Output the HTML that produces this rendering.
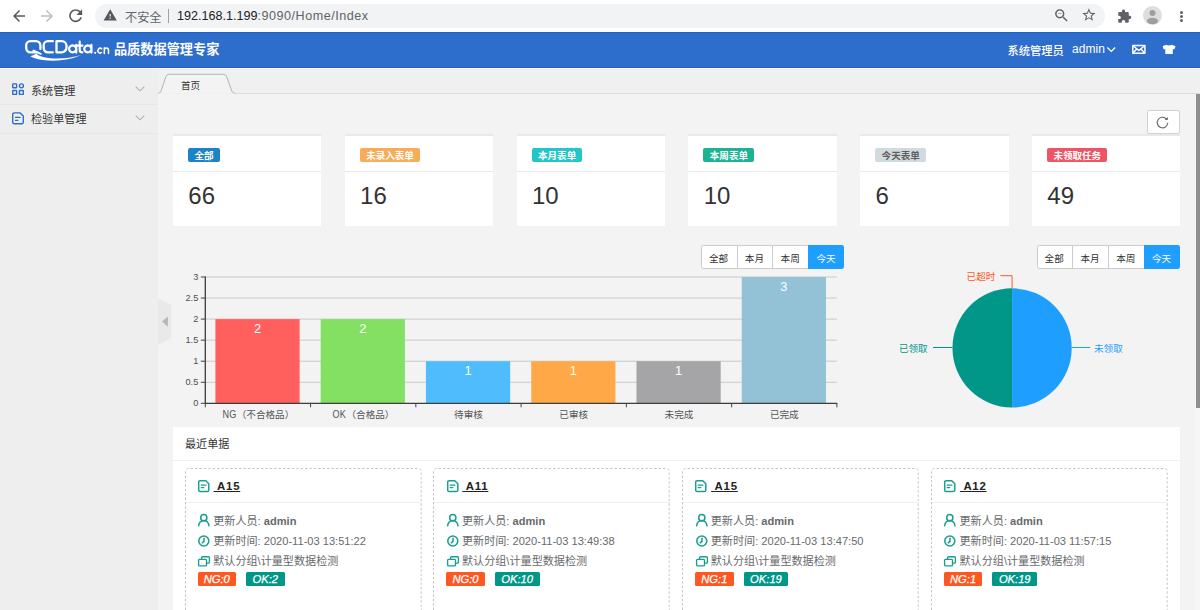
<!DOCTYPE html><html><head><meta charset="utf-8"><title>QCData</title><style>html,body{margin:0;padding:0;overflow:hidden}html{height:610px}body{width:1200px;height:610px;overflow:hidden;position:relative;background:#f3f3f4;font-family:"Liberation Sans","Noto Sans CJK SC",sans-serif;}.t{position:absolute;white-space:nowrap;font-family:"Liberation Sans","Noto Sans CJK SC",sans-serif}.cj{font-family:"Liberation Sans","Noto Sans CJK SC",sans-serif;letter-spacing:0}svg text{font-family:"Liberation Sans",sans-serif}</style></head><body><div style="position:absolute;left:0px;top:0px;width:1200px;height:33px;background:#fff"></div><svg style="position:absolute;left:10px;top:6.7px" width="18" height="18" viewBox="0 0 24 24" fill="#565a5f"><path d="M20 11H7.83l5.59-5.59L12 4l-8 8 8 8 1.41-1.41L7.83 13H20v-2z"/></svg><svg style="position:absolute;left:38.3px;top:6.7px" width="18" height="18" viewBox="0 0 24 24" fill="#bcbec1"><path d="M12 4l-1.41 1.41L16.17 11H4v2h12.17l-5.58 5.59L12 20l8-8z"/></svg><svg style="position:absolute;left:65.8px;top:6px" width="19.4" height="19.4" viewBox="0 0 24 24" fill="#565a5f"><path d="M17.65 6.35C16.2 4.9 14.21 4 12 4c-4.42 0-7.99 3.58-7.99 8s3.57 8 7.99 8c3.73 0 6.84-2.55 7.73-6h-2.08c-.82 2.33-3.04 4-5.65 4-3.31 0-6-2.69-6-6s2.69-6 6-6c1.66 0 3.14.69 4.22 1.78L13 11h7V4l-2.35 2.35z"/></svg><div style="position:absolute;left:95px;top:3.7px;width:1010px;height:24.2px;background:#f1f3f4;border-radius:12.100px"></div><svg style="position:absolute;left:103.4px;top:8.4px" width="14.4" height="14.4" viewBox="0 0 24 24" fill="#55585c"><path d="M1 21h22L12 2 1 21zm12-3h-2v-2h2v2zm0-4h-2v-4h2v4z"/></svg><div class="t" style="left:125px;top:8.6px;line-height:16px"><span class="cj" style="font-size:12.2px;color:#5f6368">不安全</span></div><div style="position:absolute;left:168px;top:9px;width:1px;height:14px;background:#9aa0a6"></div><div class="t" style="left:177px;top:7.5px;font-size:12.6px;line-height:17px"><span style="color:#202124">192.168.1.199</span><span style="color:#5f6368;letter-spacing:0.5px">:9090/Home/Index</span></div><svg style="position:absolute;left:1052.6px;top:7.1px" width="17.1" height="17.1" viewBox="0 0 24 24" fill="#5f6368"><path d="M15.5 14h-.79l-.28-.27C15.41 12.59 16 11.11 16 9.5 16 5.91 13.09 3 9.5 3S3 5.91 3 9.5 5.91 16 9.5 16c1.61 0 3.09-.59 4.23-1.57l.27.28v.79l5 4.99L20.49 19l-4.99-5zm-6 0C7.01 14 5 11.99 5 9.5S7.01 5 9.5 5 14 7.01 14 9.5 11.99 14 9.5 14zM7 9h5v1H7z"/></svg><svg style="position:absolute;left:1081px;top:7.4px" width="15.8" height="15.8" viewBox="0 0 24 24" fill="#5f6368"><path d="M22 9.24l-7.19-.62L12 2 9.19 8.63 2 9.24l5.46 4.73L5.82 21 12 17.27 18.18 21l-1.63-7.03L22 9.24zM12 15.4l-3.76 2.27 1-4.28-3.32-2.88 4.38-.38L12 6.1l1.71 4.04 4.38.38-3.32 2.88 1 4.28L12 15.4z"/></svg><svg style="position:absolute;left:1116.8px;top:9.1px" width="14.9" height="14.9" viewBox="0 0 24 24" fill="#5f6368"><path d="M20.5 11H19V7c0-1.1-.9-2-2-2h-4V3.5C13 2.12 11.88 1 10.5 1S8 2.12 8 3.5V5H4c-1.1 0-1.99.9-1.99 2v3.8H3.5c1.49 0 2.7 1.21 2.7 2.7s-1.21 2.7-2.7 2.7H2V20c0 1.1.9 2 2 2h3.8v-1.5c0-1.49 1.21-2.7 2.7-2.7 1.49 0 2.7 1.21 2.7 2.7V22H17c1.1 0 2-.9 2-2v-4h1.5c1.38 0 2.5-1.12 2.5-2.5S21.88 11 20.5 11z"/></svg><svg style="position:absolute;left:1143px;top:6px" width="19" height="19" viewBox="0 0 19 19"><defs><clipPath id="avc"><circle cx="9.5" cy="9.5" r="9.5"/></clipPath></defs><circle cx="9.5" cy="9.5" r="9.5" fill="#dddddd"/><g clip-path="url(#avc)" fill="#9e9e9e"><circle cx="9.5" cy="7" r="3"/><ellipse cx="9.5" cy="15" rx="5.6" ry="3.3"/></g></svg><div style="position:absolute;left:1179.5px;top:10.7px;width:3px;height:3px;background:#5f6368;border-radius:50%"></div><div style="position:absolute;left:1179.5px;top:15.0px;width:3px;height:3px;background:#5f6368;border-radius:50%"></div><div style="position:absolute;left:1179.5px;top:19.3px;width:3px;height:3px;background:#5f6368;border-radius:50%"></div><div style="position:absolute;left:0px;top:32.1px;width:1200px;height:35.4px;background:#2d6dcc"></div><div style="position:absolute;left:0px;top:32.1px;width:1200px;height:1px;background:#2461c4"></div><div style="position:absolute;left:0px;top:66.5px;width:1200px;height:1px;background:#2461c4"></div><svg style="position:absolute;left:20px;top:36px" width="95" height="28" viewBox="20 36 95 28" fill="none" stroke="#fff" stroke-width="2.3" stroke-linecap="round" stroke-linejoin="round"><path d="M36.5 52.3H30.4a4.2 4.2 0 0 1-4.2-4.2v-2.7a4.2 4.2 0 0 1 4.2-4.2h5.8a4.2 4.2 0 0 1 4.2 4.2v3.6"/><path d="M33.5 50.6l7.2 3.2" stroke-width="2"/><path d="M52.8 41.2H47.9a4.2 4.2 0 0 0-4.2 4.2v2.7a4.2 4.2 0 0 0 4.2 4.2h4.9"/><path d="M56.5 41.2v11.1h5.3a4.7 4.7 0 0 0 4.7-4.7v-1.7a4.7 4.7 0 0 0-4.7-4.7z"/><path d="M76.200 45v7.600M76.200 48.300a3.600 3.400 0 1 0 0 1.200" stroke-width="2.300"/><path d="M79.7 41.6v8.3q0 2.4 2.6 2.4M77.8 45.6h4.6" stroke-width="2.2"/><path d="M91.400 45v7.600M91.400 48.300a3.600 3.400 0 1 0 0 1.200" stroke-width="2.300"/><path d="M30.3 56.2q4-.8 6-2.6q3 3.8 14 4.6q16 1.1 31-3.3q-15 6.6-33 5.6q-13-.8-18-4.3z" fill="#fff" stroke="none"/><circle cx="95.2" cy="52.8" r="1.1" fill="#fff" stroke="none"/><path d="M101.6 48.7a2.3 2.4 0 1 0 0 3.8" stroke-width="1.5"/><path d="M104.3 53.4v-5.6M104.3 50.3q.2-2.4 2.2-2.4t2 2.4v3.1" stroke-width="1.5"/></svg><div class="t" style="left:113.9px;top:41.4px;line-height:16px"><span class="cj" style="font-size:13.2px;font-weight:bold;color:#fff">品质数据管理专家</span></div><div class="t" style="left:1007.4px;top:41.5px;line-height:16px"><span class="cj" style="font-size:11.3px;font-weight:500;color:#fff">系统管理员</span></div><div class="t" style="left:1072px;top:41px;font-size:12px;line-height:16px;color:#fff;letter-spacing:0.05px">admin</div><svg style="position:absolute;left:1105px;top:45px" width="12" height="10" viewBox="1105 45 12 10" fill="none" stroke="#fff" stroke-width="1.3"><path d="M1107.4 47.5l3.900 3.900 3.900-3.900"/></svg><svg style="position:absolute;left:1130px;top:43px" width="18" height="13" viewBox="1130 43 18 13" fill="none" stroke="#fff" stroke-width="1.5" stroke-linejoin="round"><rect x="1132.8" y="45.5" width="12.1" height="7.7"/><path d="M1132.8 45.5l6.050 5 6.050-5M1132.8 53.2l4-4.200M1144.9 53.2l-4-4.200"/></svg><svg style="position:absolute;left:1161px;top:43px" width="17" height="13" viewBox="1161 43 17 13" fill="#fff"><path d="M1166 44.800q2.900 1.500 5.800 0l3.700 1.500-1.200 3.100-1.500-.5v5H1165.300v-5l-1.500.5-1.200-3.100z"/></svg><div style="position:absolute;left:0px;top:67.5px;width:158px;height:542.5px;background:#eeeeee"></div><div style="position:absolute;left:157.6px;top:67.5px;width:1px;height:542.5px;background:#f5f5f5"></div><div style="position:absolute;left:0px;top:103.8px;width:157.6px;height:1px;background:#e6e6e6"></div><div style="position:absolute;left:0px;top:132.7px;width:157.6px;height:1px;background:#e6e6e6"></div><svg style="position:absolute;left:11px;top:82.300px" width="15" height="15" viewBox="11 82 15 15" fill="none" stroke="#2d6dcc" stroke-width="1.4"><rect x="12.7" y="83.9" width="3.9" height="3.9" rx=".5"/><circle cx="21.4" cy="85.85" r="2"/><rect x="12.7" y="90.5" width="3.9" height="3.9" rx=".5"/><rect x="19.4" y="90.5" width="3.9" height="3.9" rx=".5"/></svg><div class="t" style="left:31px;top:81.5px;line-height:16px"><span class="cj" style="font-size:11.1px;color:#333">系统管理</span></div><svg style="position:absolute;left:134px;top:84.8px" width="12" height="8" viewBox="0 0 12 8" fill="none" stroke="#b0b0b0" stroke-width="1.1"><path d="M1.700 1.700l4.300 4.100 4.300-4.100"/></svg><svg style="position:absolute;left:11px;top:110.800px" width="15" height="15" viewBox="11 111 15 15" fill="none" stroke="#2d6dcc" stroke-width="1.4" stroke-linejoin="round"><path d="M14.2 112.9h6l3.1 3.1v6.3a1.5 1.5 0 0 1-1.5 1.5h-7.6a1.5 1.5 0 0 1-1.5-1.5v-7.9a1.5 1.5 0 0 1 1.5-1.5z"/><path d="M15 117.4h5.6M15 120.3h3.4" stroke-width="1.2"/></svg><div class="t" style="left:31px;top:110.3px;line-height:16px"><span class="cj" style="font-size:11.1px;color:#333">检验单管理</span></div><svg style="position:absolute;left:134px;top:114px" width="12" height="8" viewBox="0 0 12 8" fill="none" stroke="#b0b0b0" stroke-width="1.1"><path d="M1.700 1.700l4.300 4.100 4.300-4.100"/></svg><div style="position:absolute;left:158px;top:67.5px;width:1042px;height:26px;background:#f0f0f1"></div><div style="position:absolute;left:0px;top:67.5px;width:1200px;height:1px;background:#f8f8f8"></div><div style="position:absolute;left:158px;top:93.5px;width:1042px;height:516.5px;background:#f3f3f4"></div><div style="position:absolute;left:158px;top:93px;width:1042px;height:1px;background:#dcdcdc"></div><svg style="position:absolute;left:156px;top:72px" width="84" height="23" viewBox="156 72 84 23"><path d="M157.800 93.500q2.400 0 3.300-2.600l4.700-14q.9-2.600 3.300-2.600h54.400q2.400 0 3.300 2.600l4.900 14q.9 2.600 3.800 2.600" fill="#f3f3f4" stroke="#b4b4b4" stroke-width="1"/><path d="M158.500 94h76" stroke="#f3f3f4" stroke-width="1.600"/></svg><div class="t" style="left:181px;top:75.5px;line-height:16px"><span class="cj" style="font-size:9.6px;color:#333">首页</span></div><div style="position:absolute;left:1194.8px;top:93.5px;width:5.2px;height:516.5px;background:#f6f6f6"></div><div style="position:absolute;left:1196px;top:93.5px;width:4px;height:314px;background:#8f8f8f"></div><svg style="position:absolute;left:157px;top:296px" width="16" height="52" viewBox="157 296 16 52"><path d="M158.200 298.300l12.100 6.100q1 .5 1 1.600v31.400q0 1.100-1 1.600l-12.100 6.100z" fill="#e9e9e9"/><path d="M167.900 316.400v10.400l-5.900-5.200z" fill="#b7b7b7"/></svg><div style="position:absolute;left:1147.3px;top:110.2px;width:32.5px;height:23.6px;background:#fff;border:1px solid #d2d2d2;border-radius:2px;box-sizing:border-box"></div><svg style="position:absolute;left:1155px;top:115px" width="16" height="16" viewBox="1155 115 16 16" fill="none" stroke="#666" stroke-width="1.1"><path d="M1166.6 119.200a5.300 5.300 0 1 0 1.200 3.600"/><path d="M1167.800 117v3h-3z" fill="#666" stroke="none"/></svg><div style="position:absolute;left:173.0px;top:133.7px;width:148.4px;height:92px;background:#fff"></div><div style="position:absolute;left:173.0px;top:133.7px;width:148.4px;height:2px;background:#e7eaec"></div><div style="position:absolute;left:173.0px;top:171px;width:148.4px;height:1px;background:#e7eaec"></div><div style="position:absolute;left:188.0px;top:147.5px;width:31.7px;height:14.3px;background:#1c84c6;border-radius:2px"></div><div class="t" style="left:194.4px;top:145.9px;line-height:16px"><span class="cj" style="font-size:9.55px;font-weight:bold;color:#fff">全部</span></div><div class="t" style="left:188.3px;top:181.5px;font-size:24px;line-height:28px;color:#333">66</div><div style="position:absolute;left:344.8px;top:133.7px;width:148.4px;height:92px;background:#fff"></div><div style="position:absolute;left:344.8px;top:133.7px;width:148.4px;height:2px;background:#e7eaec"></div><div style="position:absolute;left:344.8px;top:171px;width:148.4px;height:1px;background:#e7eaec"></div><div style="position:absolute;left:359.8px;top:147.5px;width:60.2px;height:14.3px;background:#f8ac59;border-radius:2px"></div><div class="t" style="left:366.2px;top:145.9px;line-height:16px"><span class="cj" style="font-size:9.55px;font-weight:bold;color:#fff">未录入表单</span></div><div class="t" style="left:360.1px;top:181.5px;font-size:24px;line-height:28px;color:#333">16</div><div style="position:absolute;left:516.6px;top:133.7px;width:148.4px;height:92px;background:#fff"></div><div style="position:absolute;left:516.6px;top:133.7px;width:148.4px;height:2px;background:#e7eaec"></div><div style="position:absolute;left:516.6px;top:171px;width:148.4px;height:1px;background:#e7eaec"></div><div style="position:absolute;left:531.6px;top:147.5px;width:50.7px;height:14.3px;background:#23c6c8;border-radius:2px"></div><div class="t" style="left:538.0px;top:145.9px;line-height:16px"><span class="cj" style="font-size:9.55px;font-weight:bold;color:#fff">本月表单</span></div><div class="t" style="left:531.9px;top:181.5px;font-size:24px;line-height:28px;color:#333">10</div><div style="position:absolute;left:688.4000000000001px;top:133.7px;width:148.4px;height:92px;background:#fff"></div><div style="position:absolute;left:688.4000000000001px;top:133.7px;width:148.4px;height:2px;background:#e7eaec"></div><div style="position:absolute;left:688.4000000000001px;top:171px;width:148.4px;height:1px;background:#e7eaec"></div><div style="position:absolute;left:703.4000000000001px;top:147.5px;width:50.7px;height:14.3px;background:#1ab394;border-radius:2px"></div><div class="t" style="left:709.8000000000001px;top:145.9px;line-height:16px"><span class="cj" style="font-size:9.55px;font-weight:bold;color:#fff">本周表单</span></div><div class="t" style="left:703.7px;top:181.5px;font-size:24px;line-height:28px;color:#333">10</div><div style="position:absolute;left:860.2px;top:133.7px;width:148.4px;height:92px;background:#fff"></div><div style="position:absolute;left:860.2px;top:133.7px;width:148.4px;height:2px;background:#e7eaec"></div><div style="position:absolute;left:860.2px;top:171px;width:148.4px;height:1px;background:#e7eaec"></div><div style="position:absolute;left:875.2px;top:147.5px;width:50.7px;height:14.3px;background:#d1dade;border-radius:2px"></div><div class="t" style="left:881.6px;top:145.9px;line-height:16px"><span class="cj" style="font-size:9.55px;font-weight:bold;color:#5e5e5e">今天表单</span></div><div class="t" style="left:875.5px;top:181.5px;font-size:24px;line-height:28px;color:#333">6</div><div style="position:absolute;left:1032.0px;top:133.7px;width:148.4px;height:92px;background:#fff"></div><div style="position:absolute;left:1032.0px;top:133.7px;width:148.4px;height:2px;background:#e7eaec"></div><div style="position:absolute;left:1032.0px;top:171px;width:148.4px;height:1px;background:#e7eaec"></div><div style="position:absolute;left:1047.0px;top:147.5px;width:60.2px;height:14.3px;background:#ed5565;border-radius:2px"></div><div class="t" style="left:1053.4px;top:145.9px;line-height:16px"><span class="cj" style="font-size:9.55px;font-weight:bold;color:#fff">未领取任务</span></div><div class="t" style="left:1047.3px;top:181.5px;font-size:24px;line-height:28px;color:#333">49</div><div style="position:absolute;left:701.2px;top:245.3px;width:143.2px;height:23.5px;background:#fff;border:1px solid #ccc;border-radius:2.4px;box-sizing:border-box"></div><div style="position:absolute;left:736.5px;top:245.3px;width:1px;height:23.5px;background:#ccc"></div><div style="position:absolute;left:772.3000000000001px;top:245.3px;width:1px;height:23.5px;background:#ccc"></div><div style="position:absolute;left:808.2px;top:245.3px;width:36.199999999999996px;height:23.5px;background:#1e9fff;border-radius:0 2.4px 2.4px 0"></div><div class="t" style="left:709.0px;top:249px;line-height:16px"><span class="cj" style="font-size:9.6px;color:#333">全部</span></div><div class="t" style="left:744.8px;top:249px;line-height:16px"><span class="cj" style="font-size:9.6px;color:#333">本月</span></div><div class="t" style="left:780.6px;top:249px;line-height:16px"><span class="cj" style="font-size:9.6px;color:#333">本周</span></div><div class="t" style="left:816.4px;top:249px;line-height:16px"><span class="cj" style="font-size:9.6px;color:#fff">今天</span></div><div style="position:absolute;left:1036.8px;top:245.3px;width:143.2px;height:23.5px;background:#fff;border:1px solid #ccc;border-radius:2.4px;box-sizing:border-box"></div><div style="position:absolute;left:1072.1px;top:245.3px;width:1px;height:23.5px;background:#ccc"></div><div style="position:absolute;left:1107.8999999999999px;top:245.3px;width:1px;height:23.5px;background:#ccc"></div><div style="position:absolute;left:1143.8px;top:245.3px;width:36.199999999999996px;height:23.5px;background:#1e9fff;border-radius:0 2.4px 2.4px 0"></div><div class="t" style="left:1044.6px;top:249px;line-height:16px"><span class="cj" style="font-size:9.6px;color:#333">全部</span></div><div class="t" style="left:1080.3999999999999px;top:249px;line-height:16px"><span class="cj" style="font-size:9.6px;color:#333">本月</span></div><div class="t" style="left:1116.1999999999998px;top:249px;line-height:16px"><span class="cj" style="font-size:9.6px;color:#333">本周</span></div><div class="t" style="left:1152.0px;top:249px;line-height:16px"><span class="cj" style="font-size:9.6px;color:#fff">今天</span></div><svg style="position:absolute;left:0;top:0" width="1200" height="610" viewBox="0 0 1200 610"><path d="M205.3 382.25H836.9" stroke="#c9c9c9" stroke-width="1"/><path d="M205.3 361.20H836.9" stroke="#c9c9c9" stroke-width="1"/><path d="M205.3 340.15H836.9" stroke="#c9c9c9" stroke-width="1"/><path d="M205.3 319.10H836.9" stroke="#c9c9c9" stroke-width="1"/><path d="M205.3 298.05H836.9" stroke="#c9c9c9" stroke-width="1"/><path d="M205.3 277.00H836.9" stroke="#c9c9c9" stroke-width="1"/><rect x="215.40" y="319.10" width="84.22" height="84.20" fill="#ff605d"/><text x="257.51" y="332.90" text-anchor="middle" font-size="12.8" fill="#fff">2</text><rect x="320.67" y="319.10" width="84.22" height="84.20" fill="#83e062"/><text x="362.78" y="332.90" text-anchor="middle" font-size="12.8" fill="#fff">2</text><rect x="425.94" y="361.20" width="84.22" height="42.10" fill="#4fbdfd"/><text x="468.05" y="375.00" text-anchor="middle" font-size="12.8" fill="#fff">1</text><rect x="531.21" y="361.20" width="84.22" height="42.10" fill="#ffa847"/><text x="573.32" y="375.00" text-anchor="middle" font-size="12.8" fill="#fff">1</text><rect x="636.48" y="361.20" width="84.22" height="42.10" fill="#a5a5a7"/><text x="678.59" y="375.00" text-anchor="middle" font-size="12.8" fill="#fff">1</text><rect x="741.75" y="277.00" width="84.22" height="126.30" fill="#93c1d6"/><text x="783.86" y="290.80" text-anchor="middle" font-size="12.8" fill="#fff">3</text><path d="M205.3 276.50V403.8" stroke="#3c3c3c" stroke-width="1.3"/><path d="M204.8 403.3H837.2" stroke="#3c3c3c" stroke-width="1.3"/><path d="M200.8 403.30H205.3" stroke="#444" stroke-width="1"/><text transform="translate(198.30 406.40) scale(.96 1.02)" text-anchor="end" font-size="9.6" fill="#505050">0</text><path d="M200.8 382.25H205.3" stroke="#444" stroke-width="1"/><text transform="translate(198.30 385.35) scale(.96 1.02)" text-anchor="end" font-size="9.6" fill="#505050">0.5</text><path d="M200.8 361.20H205.3" stroke="#444" stroke-width="1"/><text transform="translate(198.30 364.30) scale(.96 1.02)" text-anchor="end" font-size="9.6" fill="#505050">1</text><path d="M200.8 340.15H205.3" stroke="#444" stroke-width="1"/><text transform="translate(198.30 343.25) scale(.96 1.02)" text-anchor="end" font-size="9.6" fill="#505050">1.5</text><path d="M200.8 319.10H205.3" stroke="#444" stroke-width="1"/><text transform="translate(198.30 322.20) scale(.96 1.02)" text-anchor="end" font-size="9.6" fill="#505050">2</text><path d="M200.8 298.05H205.3" stroke="#444" stroke-width="1"/><text transform="translate(198.30 301.15) scale(.96 1.02)" text-anchor="end" font-size="9.6" fill="#505050">2.5</text><path d="M200.8 277.00H205.3" stroke="#444" stroke-width="1"/><text transform="translate(198.30 280.10) scale(.96 1.02)" text-anchor="end" font-size="9.6" fill="#505050">3</text><path d="M205.30 403.3V407.3" stroke="#444" stroke-width="1"/><path d="M310.57 403.3V407.3" stroke="#444" stroke-width="1"/><path d="M415.84 403.3V407.3" stroke="#444" stroke-width="1"/><path d="M521.11 403.3V407.3" stroke="#444" stroke-width="1"/><path d="M626.38 403.3V407.3" stroke="#444" stroke-width="1"/><path d="M731.65 403.3V407.3" stroke="#444" stroke-width="1"/><path d="M836.92 403.3V407.3" stroke="#444" stroke-width="1"/></svg><div class="t" style="left:197.94px;top:407px;width:120px;text-align:center;font-size:9.8px;line-height:16px;color:#555;letter-spacing:0.2px"><span style="display:inline-block;transform:scale(.93,1.16);transform-origin:50% 78%">NG</span><span class="cj" style="font-size:9.6px;color:#555">（不合格品）</span></div><div class="t" style="left:303.20px;top:407px;width:120px;text-align:center;font-size:9.8px;line-height:16px;color:#555;letter-spacing:0.2px"><span style="display:inline-block;transform:scale(.93,1.16);transform-origin:50% 78%">OK</span><span class="cj" style="font-size:9.6px;color:#555">（合格品）</span></div><div class="t" style="left:408.48px;top:407px;width:120px;text-align:center;font-size:9.8px;line-height:16px;color:#555;letter-spacing:0.2px"><span class="cj" style="font-size:9.6px;color:#555">待审核</span></div><div class="t" style="left:513.75px;top:407px;width:120px;text-align:center;font-size:9.8px;line-height:16px;color:#555;letter-spacing:0.2px"><span class="cj" style="font-size:9.6px;color:#555">已审核</span></div><div class="t" style="left:619.01px;top:407px;width:120px;text-align:center;font-size:9.8px;line-height:16px;color:#555;letter-spacing:0.2px"><span class="cj" style="font-size:9.6px;color:#555">未完成</span></div><div class="t" style="left:724.29px;top:407px;width:120px;text-align:center;font-size:9.8px;line-height:16px;color:#555;letter-spacing:0.2px"><span class="cj" style="font-size:9.6px;color:#555">已完成</span></div><svg style="position:absolute;left:0;top:0" width="1200" height="610" viewBox="0 0 1200 610"><path d="M1012.1 288.29999999999995A59.6 59.6 0 0 1 1012.1 407.5z" fill="#1e9fff"/><path d="M1012.1 288.29999999999995A59.6 59.6 0 0 0 1012.1 407.5z" fill="#009688"/><path d="M1000.4 275.7H1012.1V288.29999999999995" fill="none" stroke="#ff5722" stroke-width="1"/><path d="M933 347.5H952.5" stroke="#009688" stroke-width="1"/><path d="M1071.7 347.5H1090.2" stroke="#1e9fff" stroke-width="1"/></svg><div class="t" style="left:966.6px;top:267.2px;line-height:16px"><span class="cj" style="font-size:9.6px;color:#ff5722">已超时</span></div><div class="t" style="left:898.9px;top:339.2px;line-height:16px"><span class="cj" style="font-size:9.6px;color:#009688">已领取</span></div><div class="t" style="left:1094px;top:339.2px;line-height:16px"><span class="cj" style="font-size:9.6px;color:#1e9fff">未领取</span></div><div style="position:absolute;left:173px;top:427.2px;width:1007px;height:182.8px;background:#fff"></div><div style="position:absolute;left:173px;top:460px;width:1007px;height:1px;background:#f1f1f1"></div><div class="t" style="left:185px;top:434.5px;line-height:16px"><span class="cj" style="font-size:11.1px;color:#333">最近单据</span></div><svg style="position:absolute;left:184.7px;top:468.4px" width="237" height="142" viewBox="0 0 237 142"><path d="M.5 142V3.500a3 3 0 0 1 3-3H233.200a3 3 0 0 1 3 3V142" fill="none" stroke="#c4c4c4" stroke-width="1" stroke-dasharray="2.400 2"/></svg><div style="position:absolute;left:185.7px;top:501.6px;width:235.2px;height:1px;background:#efefef"></div><svg style="position:absolute;left:196.8px;top:478.500px" width="14" height="15" viewBox="0 0 14 15" fill="none" stroke="#1a9f8f" stroke-width="1.500" stroke-linejoin="round"><path d="M3.100 1.700h5.700l3 3v6.500a1.400 1.400 0 0 1-1.400 1.400h-7.300a1.400 1.400 0 0 1-1.400-1.400v-8.100a1.400 1.400 0 0 1 1.400-1.400z"/><path d="M3.700 6.200h5.800M3.700 8.600h3.600" stroke-width="1.200"/></svg><div class="t" style="left:213.6px;top:478.3px;font-size:11.4px;font-weight:bold;line-height:16px;color:#222;letter-spacing:0.75px"><span style="text-decoration:underline;white-space:pre"> A15</span></div><svg style="position:absolute;left:197.0px;top:513px" width="14" height="14" viewBox="0 0 14 14" fill="none" stroke="#1a9f8f" stroke-width="1.500" stroke-linecap="round"><circle cx="6.800" cy="4.700" r="3.100"/><path d="M1.600 12.800q.6-5 5.200-5t5.200 5"/></svg><div class="t" style="left:213.2px;top:513.3px;font-size:11.1px;line-height:16px;color:#676a6c"><span class="cj" style="font-size:11.1px;color:#676a6c">更新人员</span>: <b>admin</b></div><svg style="position:absolute;left:197.0px;top:533.500px" width="14" height="14" viewBox="0 0 14 14" fill="none" stroke="#1a9f8f" stroke-width="1.550" stroke-linecap="round"><circle cx="6.800" cy="7" r="5"/><path d="M7 4.300v3l-1.700 1.500"/></svg><div class="t" style="left:213.2px;top:533.3px;font-size:11.1px;line-height:16px;color:#676a6c"><span class="cj" style="font-size:11.1px;color:#676a6c">更新时间</span>: 2020-11-03 13:51:22</div><svg style="position:absolute;left:197.0px;top:554.500px" width="14" height="13" viewBox="0 0 14 13" fill="none" stroke="#1a9f8f" stroke-width="1.350" stroke-linejoin="round"><path d="M4.600 4.200v-1.600a.9.900 0 0 1 .9-.9h6a.9.900 0 0 1 .9.900v4.600a.9.900 0 0 1-.9.900h-1.900"/><rect x="1.600" y="4.400" width="7.900" height="6.400" rx=".9"/></svg><div class="t" style="left:213.2px;top:553.3px;font-size:11.1px;line-height:16px;color:#676a6c"><span class="cj" style="font-size:11.1px;color:#676a6c">默认分组</span>\<span class="cj" style="font-size:11.1px;color:#676a6c">计量型数据检测</span></div><div style="position:absolute;left:197.6px;top:572.4px;width:38.4px;height:13.6px;background:#ff5722;border-radius:1.500px"></div><div class="t" style="left:197.6px;top:571.200px;width:38.4px;text-align:center;font-size:11.2px;line-height:16px;color:#fff;font-style:italic;-webkit-text-stroke:0.25px #fff">NG:0</div><div style="position:absolute;left:246.0px;top:572.4px;width:38.6px;height:13.6px;background:#009688;border-radius:1.500px"></div><div class="t" style="left:246.0px;top:571.200px;width:38.6px;text-align:center;font-size:11.2px;line-height:16px;color:#fff;font-style:italic;-webkit-text-stroke:0.25px #fff">OK:2</div><svg style="position:absolute;left:433.47px;top:468.4px" width="237" height="142" viewBox="0 0 237 142"><path d="M.5 142V3.500a3 3 0 0 1 3-3H233.200a3 3 0 0 1 3 3V142" fill="none" stroke="#c4c4c4" stroke-width="1" stroke-dasharray="2.400 2"/></svg><div style="position:absolute;left:434.47px;top:501.6px;width:235.2px;height:1px;background:#efefef"></div><svg style="position:absolute;left:445.57000000000005px;top:478.500px" width="14" height="15" viewBox="0 0 14 15" fill="none" stroke="#1a9f8f" stroke-width="1.500" stroke-linejoin="round"><path d="M3.100 1.700h5.700l3 3v6.500a1.400 1.400 0 0 1-1.400 1.400h-7.300a1.400 1.400 0 0 1-1.400-1.400v-8.100a1.400 1.400 0 0 1 1.400-1.400z"/><path d="M3.700 6.200h5.800M3.700 8.600h3.600" stroke-width="1.200"/></svg><div class="t" style="left:462.37px;top:478.3px;font-size:11.4px;font-weight:bold;line-height:16px;color:#222;letter-spacing:0.75px"><span style="text-decoration:underline;white-space:pre"> A11</span></div><svg style="position:absolute;left:445.77000000000004px;top:513px" width="14" height="14" viewBox="0 0 14 14" fill="none" stroke="#1a9f8f" stroke-width="1.500" stroke-linecap="round"><circle cx="6.800" cy="4.700" r="3.100"/><path d="M1.600 12.800q.6-5 5.200-5t5.200 5"/></svg><div class="t" style="left:461.97px;top:513.3px;font-size:11.1px;line-height:16px;color:#676a6c"><span class="cj" style="font-size:11.1px;color:#676a6c">更新人员</span>: <b>admin</b></div><svg style="position:absolute;left:445.77000000000004px;top:533.500px" width="14" height="14" viewBox="0 0 14 14" fill="none" stroke="#1a9f8f" stroke-width="1.550" stroke-linecap="round"><circle cx="6.800" cy="7" r="5"/><path d="M7 4.300v3l-1.700 1.500"/></svg><div class="t" style="left:461.97px;top:533.3px;font-size:11.1px;line-height:16px;color:#676a6c"><span class="cj" style="font-size:11.1px;color:#676a6c">更新时间</span>: 2020-11-03 13:49:38</div><svg style="position:absolute;left:445.77000000000004px;top:554.500px" width="14" height="13" viewBox="0 0 14 13" fill="none" stroke="#1a9f8f" stroke-width="1.350" stroke-linejoin="round"><path d="M4.600 4.200v-1.600a.9.900 0 0 1 .9-.9h6a.9.900 0 0 1 .9.900v4.600a.9.900 0 0 1-.9.900h-1.900"/><rect x="1.600" y="4.400" width="7.900" height="6.400" rx=".9"/></svg><div class="t" style="left:461.97px;top:553.3px;font-size:11.1px;line-height:16px;color:#676a6c"><span class="cj" style="font-size:11.1px;color:#676a6c">默认分组</span>\<span class="cj" style="font-size:11.1px;color:#676a6c">计量型数据检测</span></div><div style="position:absolute;left:446.37px;top:572.4px;width:38.4px;height:13.6px;background:#ff5722;border-radius:1.500px"></div><div class="t" style="left:446.37px;top:571.200px;width:38.4px;text-align:center;font-size:11.2px;line-height:16px;color:#fff;font-style:italic;-webkit-text-stroke:0.25px #fff">NG:0</div><div style="position:absolute;left:494.77px;top:572.4px;width:44.9px;height:13.6px;background:#009688;border-radius:1.500px"></div><div class="t" style="left:494.77px;top:571.200px;width:44.9px;text-align:center;font-size:11.2px;line-height:16px;color:#fff;font-style:italic;-webkit-text-stroke:0.25px #fff">OK:10</div><svg style="position:absolute;left:682.24px;top:468.4px" width="237" height="142" viewBox="0 0 237 142"><path d="M.5 142V3.500a3 3 0 0 1 3-3H233.200a3 3 0 0 1 3 3V142" fill="none" stroke="#c4c4c4" stroke-width="1" stroke-dasharray="2.400 2"/></svg><div style="position:absolute;left:683.24px;top:501.6px;width:235.2px;height:1px;background:#efefef"></div><svg style="position:absolute;left:694.3399999999999px;top:478.500px" width="14" height="15" viewBox="0 0 14 15" fill="none" stroke="#1a9f8f" stroke-width="1.500" stroke-linejoin="round"><path d="M3.100 1.700h5.700l3 3v6.500a1.400 1.400 0 0 1-1.400 1.400h-7.300a1.400 1.400 0 0 1-1.400-1.400v-8.100a1.400 1.400 0 0 1 1.400-1.400z"/><path d="M3.700 6.200h5.800M3.700 8.600h3.600" stroke-width="1.200"/></svg><div class="t" style="left:711.14px;top:478.3px;font-size:11.4px;font-weight:bold;line-height:16px;color:#222;letter-spacing:0.75px"><span style="text-decoration:underline;white-space:pre"> A15</span></div><svg style="position:absolute;left:694.54px;top:513px" width="14" height="14" viewBox="0 0 14 14" fill="none" stroke="#1a9f8f" stroke-width="1.500" stroke-linecap="round"><circle cx="6.800" cy="4.700" r="3.100"/><path d="M1.600 12.800q.6-5 5.200-5t5.200 5"/></svg><div class="t" style="left:710.74px;top:513.3px;font-size:11.1px;line-height:16px;color:#676a6c"><span class="cj" style="font-size:11.1px;color:#676a6c">更新人员</span>: <b>admin</b></div><svg style="position:absolute;left:694.54px;top:533.500px" width="14" height="14" viewBox="0 0 14 14" fill="none" stroke="#1a9f8f" stroke-width="1.550" stroke-linecap="round"><circle cx="6.800" cy="7" r="5"/><path d="M7 4.300v3l-1.700 1.500"/></svg><div class="t" style="left:710.74px;top:533.3px;font-size:11.1px;line-height:16px;color:#676a6c"><span class="cj" style="font-size:11.1px;color:#676a6c">更新时间</span>: 2020-11-03 13:47:50</div><svg style="position:absolute;left:694.54px;top:554.500px" width="14" height="13" viewBox="0 0 14 13" fill="none" stroke="#1a9f8f" stroke-width="1.350" stroke-linejoin="round"><path d="M4.600 4.200v-1.600a.9.900 0 0 1 .9-.9h6a.9.900 0 0 1 .9.900v4.600a.9.900 0 0 1-.9.900h-1.900"/><rect x="1.600" y="4.400" width="7.900" height="6.400" rx=".9"/></svg><div class="t" style="left:710.74px;top:553.3px;font-size:11.1px;line-height:16px;color:#676a6c"><span class="cj" style="font-size:11.1px;color:#676a6c">默认分组</span>\<span class="cj" style="font-size:11.1px;color:#676a6c">计量型数据检测</span></div><div style="position:absolute;left:695.14px;top:572.4px;width:38.4px;height:13.6px;background:#ff5722;border-radius:1.500px"></div><div class="t" style="left:695.14px;top:571.200px;width:38.4px;text-align:center;font-size:11.2px;line-height:16px;color:#fff;font-style:italic;-webkit-text-stroke:0.25px #fff">NG:1</div><div style="position:absolute;left:743.54px;top:572.4px;width:44.9px;height:13.6px;background:#009688;border-radius:1.500px"></div><div class="t" style="left:743.54px;top:571.200px;width:44.9px;text-align:center;font-size:11.2px;line-height:16px;color:#fff;font-style:italic;-webkit-text-stroke:0.25px #fff">OK:19</div><svg style="position:absolute;left:931.01px;top:468.4px" width="237" height="142" viewBox="0 0 237 142"><path d="M.5 142V3.500a3 3 0 0 1 3-3H233.200a3 3 0 0 1 3 3V142" fill="none" stroke="#c4c4c4" stroke-width="1" stroke-dasharray="2.400 2"/></svg><div style="position:absolute;left:932.01px;top:501.6px;width:235.2px;height:1px;background:#efefef"></div><svg style="position:absolute;left:943.1099999999999px;top:478.500px" width="14" height="15" viewBox="0 0 14 15" fill="none" stroke="#1a9f8f" stroke-width="1.500" stroke-linejoin="round"><path d="M3.100 1.700h5.700l3 3v6.500a1.400 1.400 0 0 1-1.400 1.400h-7.300a1.400 1.400 0 0 1-1.400-1.400v-8.100a1.400 1.400 0 0 1 1.400-1.400z"/><path d="M3.700 6.200h5.800M3.700 8.600h3.600" stroke-width="1.200"/></svg><div class="t" style="left:959.91px;top:478.3px;font-size:11.4px;font-weight:bold;line-height:16px;color:#222;letter-spacing:0.75px"><span style="text-decoration:underline;white-space:pre"> A12</span></div><svg style="position:absolute;left:943.31px;top:513px" width="14" height="14" viewBox="0 0 14 14" fill="none" stroke="#1a9f8f" stroke-width="1.500" stroke-linecap="round"><circle cx="6.800" cy="4.700" r="3.100"/><path d="M1.600 12.800q.6-5 5.200-5t5.200 5"/></svg><div class="t" style="left:959.51px;top:513.3px;font-size:11.1px;line-height:16px;color:#676a6c"><span class="cj" style="font-size:11.1px;color:#676a6c">更新人员</span>: <b>admin</b></div><svg style="position:absolute;left:943.31px;top:533.500px" width="14" height="14" viewBox="0 0 14 14" fill="none" stroke="#1a9f8f" stroke-width="1.550" stroke-linecap="round"><circle cx="6.800" cy="7" r="5"/><path d="M7 4.300v3l-1.700 1.500"/></svg><div class="t" style="left:959.51px;top:533.3px;font-size:11.1px;line-height:16px;color:#676a6c"><span class="cj" style="font-size:11.1px;color:#676a6c">更新时间</span>: 2020-11-03 11:57:15</div><svg style="position:absolute;left:943.31px;top:554.500px" width="14" height="13" viewBox="0 0 14 13" fill="none" stroke="#1a9f8f" stroke-width="1.350" stroke-linejoin="round"><path d="M4.600 4.200v-1.600a.9.900 0 0 1 .9-.9h6a.9.900 0 0 1 .9.900v4.600a.9.900 0 0 1-.9.900h-1.900"/><rect x="1.600" y="4.400" width="7.900" height="6.400" rx=".9"/></svg><div class="t" style="left:959.51px;top:553.3px;font-size:11.1px;line-height:16px;color:#676a6c"><span class="cj" style="font-size:11.1px;color:#676a6c">默认分组</span>\<span class="cj" style="font-size:11.1px;color:#676a6c">计量型数据检测</span></div><div style="position:absolute;left:943.91px;top:572.4px;width:38.4px;height:13.6px;background:#ff5722;border-radius:1.500px"></div><div class="t" style="left:943.91px;top:571.200px;width:38.4px;text-align:center;font-size:11.2px;line-height:16px;color:#fff;font-style:italic;-webkit-text-stroke:0.25px #fff">NG:1</div><div style="position:absolute;left:992.31px;top:572.4px;width:44.9px;height:13.6px;background:#009688;border-radius:1.500px"></div><div class="t" style="left:992.31px;top:571.200px;width:44.9px;text-align:center;font-size:11.2px;line-height:16px;color:#fff;font-style:italic;-webkit-text-stroke:0.25px #fff">OK:19</div></body></html>
